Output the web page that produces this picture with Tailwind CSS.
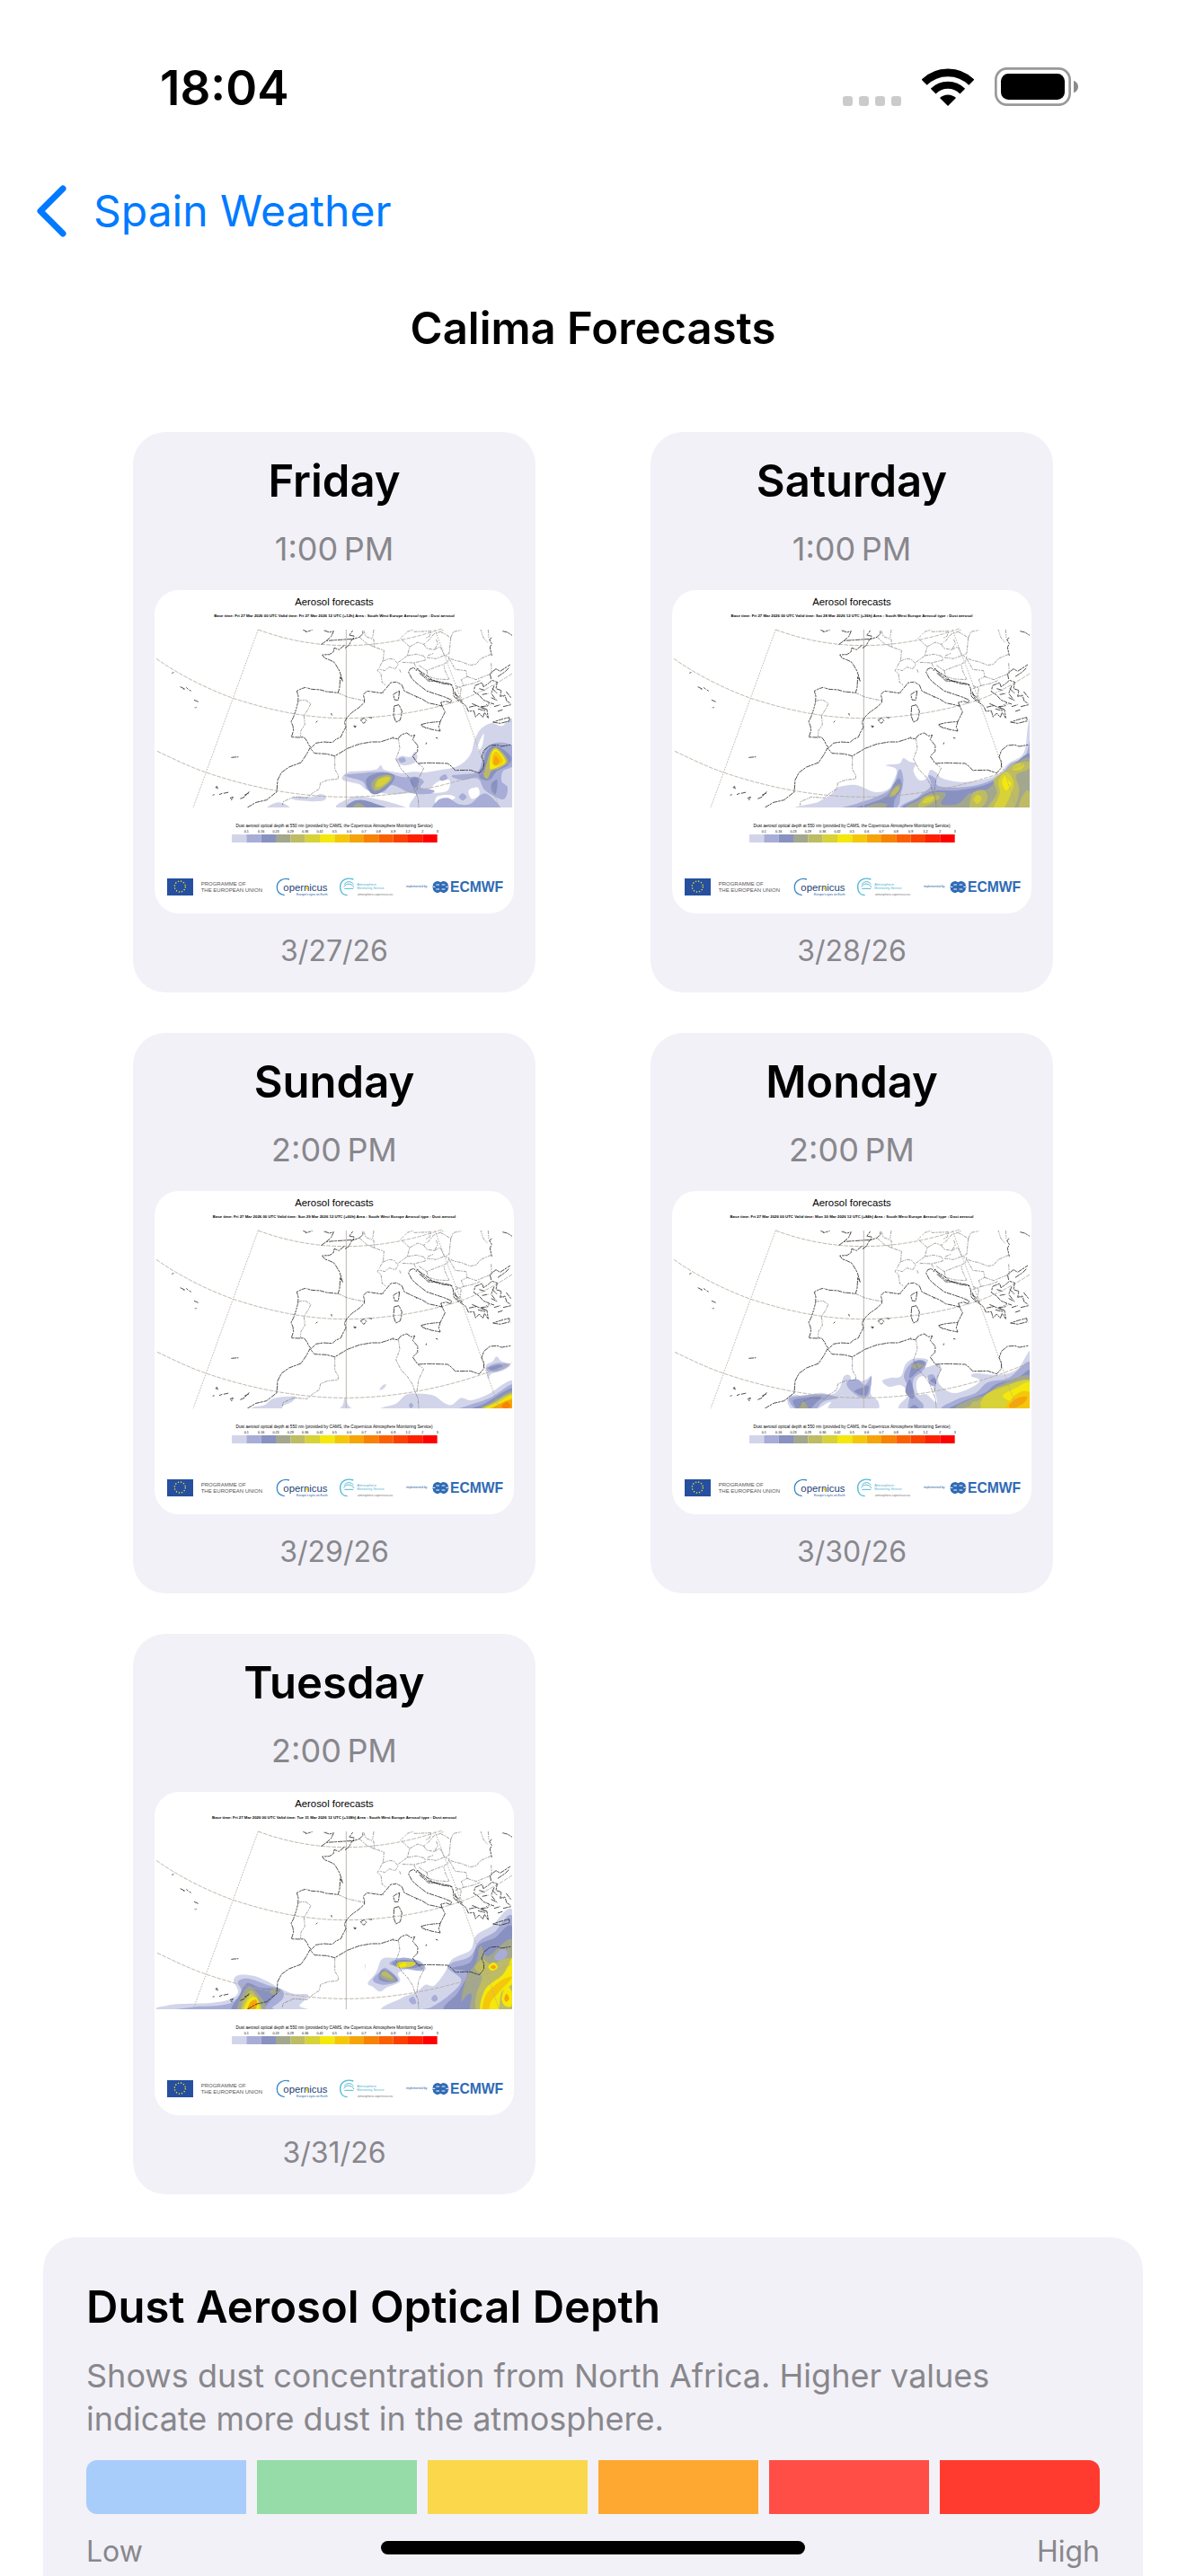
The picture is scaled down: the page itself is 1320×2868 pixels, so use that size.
<!DOCTYPE html>
<html lang="en">
    <head>
        <meta charset="UTF-8">
        <meta name="viewport" content="width=device-width, initial-scale=1.0">
        <title>Calima Forecasts</title>
        <script src="https://cdn.jsdelivr.net/npm/@tailwindcss/browser@4"></script>
    </head>
    <body class="flex flex-col min-h-screen bg-white text-black font-[Inter,sans-serif]">

        <!-- Status bar -->
        <div class="flex justify-between items-center h-[196px] pl-[178px] pr-[120px]">
            <div class="text-[53px] leading-[60px] font-semibold">18:04</div>
            <div class="flex items-end gap-[23px] pb-1">
                <svg class="w-[65px] h-[11px]" viewBox="0 0 195 33" fill="#cbcbcb">
                    <rect width="33" height="33" rx="10"/>
                    <rect x="54" width="33" height="33" rx="10"/>
                    <rect x="108" width="33" height="33" rx="10"/>
                    <rect x="162" width="33" height="33" rx="10"/>
                </svg>
                <svg class="w-[58px] h-[42px]" viewBox="374 75 174 126" fill="none" stroke="#000">
                    <path d="M382 122A112 112 0 0 1 540 122" stroke-width="26"/>
                    <path d="M412 152A69 69 0 0 1 510 152" stroke-width="24"/>
                    <path d="M461 201L434 174A39 39 0 0 1 488 174Z" fill="#000" stroke="none"/>
                </svg>
                <svg class="w-[93px] h-[43px]" viewBox="615 75 279 129">
                    <rect x="619" y="79" width="247" height="121" rx="37" fill="none" stroke="#999" stroke-width="8"/>
                    <rect x="636" y="96" width="213" height="87" rx="25"/>
                    <path d="M879 119C899 126 899 153 879 160Z" fill="#8a8a8a"/>
                </svg>
            </div>
        </div>
        <!-- /Status bar -->

        <!-- Navigation -->
        <nav class="flex items-center h-[78px] px-10">
            <a href="#" class="flex items-center gap-[30px] text-[48px] leading-[60px] text-[#007aff]">
                <svg class="w-[34px] h-[58px]" viewBox="0 0 34 58" fill="none" stroke="currentColor" stroke-width="7" stroke-linecap="round" stroke-linejoin="round">
                    <path d="M30 4L5 29L30 54"/>
                </svg>
                Spain Weather
            </a>
        </nav>

        <h1 class="mt-[62px] text-center text-[49px] leading-[60px] font-semibold">Calima Forecasts</h1>

        <!-- Forecast cards, filled by the script -->
        <main id="forecasts" class="grid grid-cols-2 justify-items-center gap-x-12 gap-y-[45px] px-[108px] mt-[85px]"></main>

        <!-- Legend -->
        <section class="flex-1 mx-12 mt-12 px-12 pt-12 rounded-t-[36px] bg-[#f2f1f7]">
            <h2 class="text-[49px] leading-[60px] font-semibold">Dust Aerosol Optical Depth</h2>
            <p class="mt-[22px] text-[36px] leading-[48px] text-[#88878c]">Shows dust concentration from North Africa. Higher values indicate more dust in the atmosphere.</p>
            <div class="grid grid-cols-6 gap-3 h-[60px] mt-[22px] rounded-xl overflow-hidden">
                <div class="bg-[#a9cdfa]"></div>
                <div class="bg-[#95dca8]"></div>
                <div class="bg-[#fad74b]"></div>
                <div class="bg-[#fea832]"></div>
                <div class="bg-[#ff4e46]"></div>
                <div class="bg-[#ff3b2f]"></div>
            </div>
            <div class="flex justify-between mt-[22px] text-[32px] leading-[40px] text-[#88878c]">
                <span>Low</span>
                <span>High</span>
            </div>
        </section>
        <!-- /Legend -->

        <!-- Home indicator -->
        <div class="fixed bottom-6 left-1/2 -translate-x-1/2 w-[472px] h-[15px] rounded-full bg-black"></div>

        <!-- Shared drawings -->
        <svg class="absolute w-0 h-0" aria-hidden="true">
            <defs>
                <clipPath id="mapArea"><rect x="12" y="153" width="1188" height="594"/></clipPath>
                <filter id="rough" x="0" y="0" width="100%" height="100%">
                    <feTurbulence type="fractalNoise" baseFrequency="0.12" numOctaves="2" seed="4"/>
                    <feDisplacementMap in="SourceGraphic" scale="5"/>
                </filter>

                <symbol id="basemap" viewBox="6 21 1200 1080">
                    <!-- graticule -->
                    <g fill="none" stroke="#b3aa9c" stroke-width="2.5">
                        <path d="M646 153V747" stroke="#bfb9ae" stroke-width="3"/>
                        <path stroke-dasharray="5 4" d="M352 153L268 382L178 630L135 747M942 153L1030 387L1115 628L1157 747"/>
                        <path stroke-dasharray="14 4" d="M352 153C450 190 550 206 646 206S850 190 965 150M12 250C90 305 180 350 268 382C400 425 520 449 646 449S920 425 1030 387C1100 362 1150 332 1200 300M15 559C70 585 120 610 178 630C330 682 490 712 646 712S970 680 1115 628L1200 595"/>
                    </g>
                    <!-- coasts -->
                    <g fill="none" stroke="#333" stroke-width="2.6" stroke-dasharray="17 2 8 3" filter="url(#rough)">
                        <path d="M640 205L622 220L606 214L603 228L590 236L566 237L574 248L590 254L606 262L616 278L624 292L634 325L626 310L624 345L619 364L600 362L580 360L560 354L530 352L510 346L497 350L481 358L486 375L485 395L479 418L470 445L462 460L468 475L470 490L463 512L490 513L505 512L515 525L522 540L530 547L545 532L570 528L600 530L610 520L628 512L634 498L645 478L640 462L650 445L665 430L690 412L706 397L707 385L703 370L715 358L735 361L765 365L780 348L795 330L815 328L832 338L840 358L870 372L900 385L920 398L940 402L966 408L976 428L970 440L960 460"/>
                        <path d="M966 408L962 396L980 392L994 398L998 388L975 378L945 368L915 358L885 335L866 318L854 295L860 284L872 280L880 290L884 282L898 300L920 318L960 328L996 335L1003 350L1005 375L1020 390L1034 398L1046 408L1054 426L1072 424L1078 445L1090 432L1102 446L1108 430L1120 448L1116 420L1096 410L1118 408L1124 396L1104 388L1090 372L1072 360L1076 340L1100 330L1104 344L1122 332L1132 322L1150 328L1146 350L1164 356L1160 376L1176 372L1182 392L1196 400"/>
                        <path d="M1130 318L1126 300L1146 284L1160 292L1194 270M1152 310L1176 294L1190 280M1134 350L1150 366M1090 350L1110 356M1100 370L1120 366M1130 380L1150 390M1140 410L1160 404M1170 410L1196 404M1128 398L1140 402M1152 426L1170 420M1056 412L1084 406M1066 400L1112 420M1086 418L1110 424M1140 340L1130 366L1144 384M1180 360L1196 380"/>
                        <path d="M886 288L912 304L934 322L962 332L1000 338M890 298L920 324L950 326M1008 360L1018 384L1034 392M1010 368L1026 382"/>
                        <path d="M896 470L920 464L960 460L955 478L960 492L930 486L900 476ZM806 408L822 404L832 425L830 440L826 455L812 462L804 440ZM824 358L820 388L808 388L803 370L815 362ZM694 455L706 448L714 458L704 466ZM722 446L732 448M671 474L679 476L675 480ZM1136 462L1160 466L1192 458L1190 446L1160 454Z"/>
                        <path d="M316 747L345 730L380 722L414 695L417 655L430 630L455 612L495 597L512 572L525 548L540 566L580 568L608 575L630 562L650 550L690 535L730 528L760 528L800 515L818 518L830 504L848 498L862 508L875 505L868 520L885 540L884 560L868 576L885 600L920 598L985 600L998 610L1010 623L1060 622L1090 632L1105 615L1106 595L1098 578L1106 556L1126 540L1150 538L1165 543L1195 538"/>
                        <path d="M562 203L580 190L610 188L640 186L670 184L672 174L656 172L668 156M572 156L590 162L604 158L596 176L580 190M502 154L515 160L533 154M642 215L655 205L665 186L690 178L702 166L700 156M1168 158L1184 162L1200 172"/>
                        <path d="M92 344L108 352M112 346L118 352M122 354L128 358M138 388L152 394M142 414L146 412M64 300L70 294M262 580L286 578M210 680L214 676L217 684ZM200 706L206 704M222 704L232 700M236 700L254 696M258 716L268 712L264 722ZM292 718L306 712L322 694M306 706L322 698M545 463L550 458M596 432L598 440M912 536L914 530M945 514L952 516M1132 180L1124 186L1132 200L1126 212L1132 240"/>
                    </g>
                    <!-- borders -->
                    <g fill="none" stroke="#777" stroke-width="2" stroke-dasharray="12 3 5 3" filter="url(#rough)">
                        <path d="M619 364L650 378L680 385L706 390M486 390L510 388L528 400L518 420L505 440L508 470L495 490L493 512M608 575L608 620L620 640L618 652L585 655L560 665L556 685L535 698L515 715L470 712L435 728L433 740M820 515L825 550L812 585L830 620L850 640L868 668L875 690L886 715L888 747M885 600L905 615L888 650L882 690"/>
                        <path d="M690 178L715 200L742 212L772 222L770 250L768 258L750 290L762 300L766 330L780 340M704 156L712 176L738 186L740 212M738 153L734 180M768 258L790 250L805 252L820 268L810 284L790 278L775 290L755 285M820 262L850 240L858 210L842 196L828 182L850 160L872 153M858 210L885 195L905 202L920 190L938 168L960 160L972 153M850 240L880 235L908 242L910 255L872 264L830 262M872 160L930 158L924 175L910 182M905 202L915 216L940 220L952 200L946 184M940 220L960 210L974 240L990 245L985 260L972 268L940 280L915 290L888 272M915 246L946 250L972 240M918 240L938 232M995 180L1004 160L1030 155M995 180L990 232L975 240M960 160L976 168L995 180M915 290L920 310L950 318L990 320L976 290L972 272M995 250L1010 256L1030 260L1060 272L1080 268L1095 250L1130 235M990 250L1010 286L1046 290L1050 310L1030 320L1038 340L1010 350M1050 310L1080 320L1130 300M1095 153L1104 180L1118 196M1120 153L1122 180M1130 265L1132 300M1010 340L1030 348L1026 378M1038 340L1072 332L1096 322M872 264L880 280M824 286L828 296"/>
                    </g>
                </symbol>

                <symbol id="logos" viewBox="6 21 1200 1080">
                    <rect x="48" y="984" width="87" height="57" fill="#264f9f"/>
                    <circle cx="91" cy="1011" r="18" fill="none" stroke="#e8dd2c" stroke-width="4" stroke-dasharray="4 5.4"/>
                    <g font-family="Liberation Sans, sans-serif">
                        <text x="161" y="1008" font-size="18" fill="#555">PROGRAMME OF</text>
                        <text x="161" y="1029" font-size="18" fill="#555">THE EUROPEAN UNION</text>
                        <text x="436" y="1026" font-size="34" fill="#1d3f77">opernicus</text>
                        <text x="480" y="1040" font-size="10" fill="#1d5c9c">Europe’s eyes on Earth</text>
                        <text x="682" y="1008" font-size="12" fill="#4fb3d0">Atmosphere</text>
                        <text x="682" y="1019" font-size="11" fill="#4fb3d0">Monitoring Service</text>
                        <text x="684" y="1040" font-size="10" fill="#777">atmosphere.copernicus.eu</text>
                        <text x="846" y="1014" font-size="10" fill="#1d5c9c">implemented by</text>
                        <text x="993" y="1029" font-size="47" font-weight="bold" fill="#2f6bb5">ECMWF</text>
                    </g>
                    <path d="M456 987C436 981 416 992 415 1012S424 1038 440 1040" fill="none" stroke="#3c88c4" stroke-width="4"/>
                    <path d="M508 1013L519 1013L519 1026Z" fill="#f4c70b"/>
                    <g fill="none" stroke="#53b9d4" stroke-width="4">
                        <path d="M670 987C648 979 626 990 626 1012S640 1040 650 1040"/>
                        <path d="M640 1004C645 992 665 992 670 1004M638 1012C645 998 665 1000 672 1014M640 1018H670" stroke-width="3"/>
                    </g>
                    <path fill="#2f6bb5" d="M936 1003C940 996 946 993 953 993L961 997L969 993C976 993 982 996 986 1003V1008H988V1017H986V1022C982 1029 976 1032 969 1032L961 1028L953 1032C946 1032 940 1029 936 1022V1017H934V1008H936Z"/>
                    <path fill="none" stroke="#fff" stroke-width="3" d="M946 1005H957M965 1005H976M946 1020H957M965 1020H976M933 1012H943M979 1012H989"/>
                </symbol>
            </defs>
        </svg>

        <script>
            // Legend scale of the chart, low to high
            const scale = ['#d2d5ea', '#a7add6', '#8891c0', '#a2a78e', '#bdbb63', '#d6d237', '#f4e80c', '#f4c70b', '#f5a50a', '#f78205', '#fa6003', '#fb4003', '#fd2001', '#ff0000'];
            const ticks = ['0.1', '0.16', '0.23', '0.29', '0.36', '0.42', '0.5', '0.6', '0.7', '0.8', '0.9', '1.2', '2', '3'];

            // Dust areas: [scale index or 'w' for a clear hole, x, y, x, y, ...]
            const forecasts = [
                {day: 'Friday', time: '1:00\u2009PM', date: '3/27/26', valid: 'Fri 27 Mar 2026 12 UTC (+12h)', dust: [
                    [0, 634,655, 650,630, 700,625, 745,620, 762,606, 775,622, 830,632, 870,628, 910,630, 960,622, 1010,612, 1045,590, 1065,560, 1075,520, 1095,485, 1130,465, 1165,475, 1205,468, 1210,760, 880,760, 880,700, 850,700, 800,703, 720,690, 690,670],
                    [0, 385,750, 395,738, 420,730, 445,738, 455,750], [0, 468,720, 480,710, 530,712, 560,702, 578,710, 570,724, 520,726],
                    [0, 620,750, 660,715, 700,710, 770,724, 840,745, 840,755],
                    [0, 812,590, 830,575, 860,578, 875,560, 884,580, 870,600, 835,606],
                    ['w', 925,690, 950,662, 990,655, 985,690, 945,698], ['w', 950,710, 990,705, 1010,715, 980,728, 945,735],
                    ['w', 1085,540, 1105,500, 1100,540, 1088,556], ['w', 1055,690, 1085,680, 1090,705, 1065,718],
                    [1, 640,640, 700,632, 770,628, 830,645, 880,645, 905,660, 895,680, 940,690, 920,702, 860,698, 800,672, 770,695, 720,690, 700,660],
                    [1, 820,585, 838,580, 845,592, 830,598], [1, 958,648, 975,636, 984,650, 965,658],
                    [1, 1000,640, 1080,630, 1100,590, 1110,550, 1150,530, 1205,545, 1205,605, 1170,625, 1165,660, 1185,680, 1170,720, 1110,690, 1085,650, 1030,655],
                    [1, 1022,712, 1035,700, 1048,712, 1035,724], [1, 950,725, 985,715, 1020,735, 1060,735, 1110,700, 1160,745, 1160,760, 950,760],
                    [2, 712,655, 740,635, 790,632, 808,645, 790,675, 750,702, 725,695],
                    [2, 652,750, 665,728, 700,722, 745,735, 775,750], [2, 862,650, 885,648, 880,680, 865,672],
                    [2, 1090,630, 1105,600, 1115,560, 1145,540, 1195,575, 1188,605, 1150,625, 1125,655, 1095,650], [2, 1130,670, 1150,655, 1146,700, 1134,695],
                    [3, 730,665, 755,642, 792,638, 800,652, 765,685, 738,692], [3, 668,750, 685,732, 710,745, 712,755],
                    [4, 740,680, 748,655, 785,640, 795,655, 765,680, 745,688], [4, 1105,640, 1115,600, 1128,560, 1150,548, 1185,590, 1160,615, 1132,625, 1118,650],
                    [5, 746,676, 755,654, 785,645, 790,655, 765,675], [6, 1125,610, 1130,570, 1148,552, 1178,592, 1155,612, 1130,620],
                    [7, 1134,600, 1136,570, 1150,562, 1170,592, 1150,608], [8, 1138,600, 1142,575, 1158,590, 1148,605]
                ]},
                {day: 'Saturday', time: '1:00\u2009PM', date: '3/28/26', valid: 'Sat 28 Mar 2026 12 UTC (+36h)', dust: [
                    [0, 460,755, 495,728, 535,705, 560,680, 620,672, 680,695, 725,688, 745,660, 755,620, 718,606, 765,600, 778,582, 800,595, 820,600, 812,625, 830,655, 855,650, 868,622, 888,630, 910,650, 970,662, 1040,655, 1095,635, 1130,600, 1180,565, 1195,470, 1210,440, 1210,760],
                    [1, 560,755, 620,735, 680,715, 740,680, 765,620, 778,650, 770,700, 740,755], [1, 790,755, 830,710, 870,675, 862,640, 885,650, 895,675, 960,680, 1040,668, 1100,640, 1135,602, 1185,575, 1210,500, 1210,760],
                    [2, 600,755, 650,738, 720,710, 745,670, 765,650, 772,680, 750,720, 730,755], [2, 800,755, 830,715, 880,692, 960,690, 1050,672, 1110,640, 1150,600, 1210,575, 1210,760],
                    [3, 640,755, 665,740, 700,732, 725,738, 700,755], [3, 730,705, 745,682, 768,670, 765,690, 740,712], [3, 812,755, 830,722, 870,700, 920,700, 905,735, 960,735, 1000,700, 1050,690, 1100,650, 1150,605, 1205,590, 1210,760],
                    [4, 738,700, 758,676, 764,688, 745,708], [4, 828,740, 850,712, 885,705, 900,715, 870,735, 835,750], [4, 1000,755, 1010,700, 1050,690, 1058,720, 1035,750], [4, 1080,655, 1120,625, 1150,600, 1200,595, 1195,620, 1155,640, 1165,690, 1140,755, 1060,755, 1090,700], [4, 1170,720, 1195,690, 1205,755, 1165,755],
                    [5, 842,732, 855,715, 880,712, 870,728], [5, 1012,722, 1025,705, 1040,715, 1028,735], [5, 1095,660, 1118,628, 1140,645, 1145,680, 1110,755, 1080,750, 1100,700], [5, 1138,620, 1160,602, 1182,604, 1170,622],
                    [6, 1108,665, 1118,640, 1128,655, 1138,668, 1122,690]
                ]},
                {day: 'Sunday', time: '2:00\u2009PM', date: '3/29/26', valid: 'Sun 29 Mar 2026 12 UTC (+60h)', dust: [
                    [0, 318,755, 340,742, 375,735, 400,715, 440,708, 478,708, 465,725, 435,738, 420,755], [0, 622,755, 635,735, 642,712, 652,735, 668,755], [0, 757,685, 768,670, 780,668, 770,682],
                    [0, 780,755, 815,730, 850,700, 900,698, 940,705, 975,730, 1000,735, 1030,712, 1065,720, 1120,700, 1205,655, 1205,760],
                    [0, 1112,605, 1135,590, 1148,574, 1165,590, 1195,600, 1170,620, 1130,632, 1120,650],
                    [1, 855,738, 862,728, 870,738, 862,746], [1, 1020,755, 1060,735, 1130,710, 1205,668, 1205,760], [1, 1116,610, 1150,596, 1190,602, 1150,624, 1120,622],
                    [2, 1120,612, 1150,602, 1168,606, 1140,620], [2, 1060,755, 1110,730, 1205,680, 1205,760], [3, 1085,755, 1130,728, 1205,690, 1205,760], [5, 1095,755, 1140,728, 1205,697, 1205,760],
                    [6, 1100,755, 1150,730, 1205,704, 1205,760], [7, 1120,755, 1160,730, 1205,714, 1205,760], [8, 1130,755, 1165,730, 1205,720, 1205,760], [9, 1165,740, 1182,725, 1195,738, 1180,748]
                ]},
                {day: 'Monday', time: '2:00\u2009PM', date: '3/30/26', valid: 'Mon 30 Mar 2026 12 UTC (+84h)', dust: [
                    [0, 390,715, 415,702, 440,705, 500,695, 540,700, 565,680, 580,640, 600,638, 610,662, 655,650, 672,640, 670,700, 695,725, 680,755, 535,755, 535,725, 475,755, 410,755],
                    [0, 708,655, 735,645, 770,640, 785,600, 815,580, 860,585, 850,610, 890,600, 905,612, 895,660, 940,695, 990,685, 1035,655, 1005,640, 1020,630, 1100,635, 1160,615, 1210,555, 1210,760, 790,760, 795,700, 770,670, 730,675],
                    ['w', 822,660, 838,640, 865,650, 882,690, 890,730, 855,700, 828,700],
                    [1, 396,715, 440,704, 510,700, 560,712, 510,725, 480,755, 425,755], [1, 590,660, 625,650, 650,668, 672,640, 664,700, 640,712, 600,685], [1, 780,640, 800,600, 830,585, 855,595, 840,625, 812,650, 815,700, 845,735, 835,755, 795,755, 800,690], [1, 860,640, 880,635, 888,665, 870,670],
                    [1, 920,755, 950,720, 1020,695, 1060,660, 1130,645, 1205,595, 1210,760],
                    [2, 410,720, 460,710, 505,708, 485,730, 460,755, 430,755], [2, 615,690, 640,678, 662,672, 652,705], [2, 798,645, 812,595, 840,588, 850,600, 825,625], [2, 785,690, 800,650, 815,700, 806,715], [2, 795,755, 815,735, 832,755], [2, 868,655, 882,645, 888,665], [2, 945,755, 975,725, 1050,695, 1090,665, 1160,645, 1205,625, 1205,760],
                    [3, 430,750, 442,722, 455,735, 462,755], [3, 806,608, 820,598, 845,602, 825,616], [3, 960,755, 1000,718, 1060,700, 1100,670, 1205,640, 1205,760], [4, 975,755, 1010,735, 1070,690, 1110,672, 1205,655, 1205,760],
                    [5, 995,755, 1030,735, 1055,700, 1100,680, 1205,655, 1205,760], [4, 1000,755, 1010,725, 1035,730, 1030,755], [6, 1110,705, 1150,680, 1205,662, 1205,760, 1130,760, 1140,730], [7, 1120,755, 1140,715, 1175,690, 1205,700, 1205,760], [8, 1130,740, 1155,715, 1190,708, 1180,730, 1150,745]
                ]},
                {day: 'Tuesday', time: '2:00\u2009PM', date: '3/31/26', valid: 'Tue 31 Mar 2026 12 UTC (+108h)', dust: [
                    [0, 15,755, 60,732, 130,728, 200,725, 255,715, 285,690, 270,650, 290,632, 340,636, 385,655, 420,675, 470,695, 520,700, 490,735, 500,755],
                    [0, 718,660, 745,625, 765,580, 800,575, 840,578, 890,585, 912,610, 895,620, 860,612, 820,625, 825,655, 780,675, 758,688, 735,672],
                    [0, 785,755, 830,710, 880,690, 910,665, 940,668, 975,625, 1000,580, 1060,550, 1080,500, 1130,470, 1205,425, 1210,760],
                    [0, 708,600, 710,596, 711,615], [1, 60,755, 130,740, 250,730, 295,690, 285,655, 320,645, 380,665, 430,682, 435,710, 400,740, 390,755],
                    [1, 735,650, 760,620, 780,610, 820,650, 770,665], [1, 790,595, 830,575, 880,583, 908,605, 890,618, 840,610], [1, 880,755, 930,740, 990,700, 1030,650, 985,610, 1000,592, 1060,570, 1090,520, 1140,490, 1205,445, 1210,760], [1, 930,712, 942,698, 952,712, 940,722], [1, 855,715, 870,705, 880,725, 866,730],
                    [2, 265,755, 290,700, 315,660, 360,675, 425,680, 405,705, 375,740, 370,755], [2, 755,645, 765,615, 795,625, 818,652, 780,656], [2, 800,592, 830,582, 870,586, 895,602, 860,610, 820,608], [2, 980,755, 1020,690, 1050,625, 1000,610, 1060,590, 1085,535, 1140,510, 1205,480, 1210,760],
                    [3, 285,755, 298,700, 320,672, 345,688, 375,730, 360,755], [3, 390,690, 405,676, 420,685, 405,698], [3, 760,638, 775,618, 808,645, 800,655], [3, 1030,720, 1048,640, 1080,590, 1095,535, 1120,570, 1205,520, 1210,760, 1070,760, 1065,700, 1050,700], [1, 1140,575, 1165,545, 1185,560, 1165,585],
                    [4, 298,755, 308,705, 330,685, 355,720, 362,755], [4, 765,632, 778,622, 802,645], [4, 1075,610, 1100,580, 1130,595, 1190,575, 1205,600, 1205,760, 1090,760, 1080,700, 1100,640], [5, 815,605, 820,590, 860,588, 878,592, 870,602, 835,609], [5, 300,755, 320,705, 335,700, 358,735, 358,755],
                    [6, 818,603, 840,592, 848,600, 825,607], [6, 306,755, 320,715, 345,708, 355,735, 345,755], [8, 315,755, 325,725, 345,715, 348,735, 335,755], [6, 1095,755, 1110,680, 1170,630, 1205,570, 1205,655, 1165,690, 1150,755], [7, 1100,755, 1115,695, 1165,650, 1200,640, 1165,680, 1130,720, 1120,755], [6, 1120,605, 1138,590, 1152,606, 1136,620], [8, 1128,606, 1138,599, 1146,606, 1138,613],
                    [6, 1165,710, 1180,670, 1200,690, 1198,735, 1175,735], [8, 1174,710, 1182,695, 1190,712, 1180,722]
                ]}
            ];

            // Smooth closed outline through the points
            function outline(p) {
                const n = p.length / 2;
                const at = function(i) { const k = (i + n) % n; return [p[k * 2], p[k * 2 + 1]]; };
                let d = 'M' + at(0);
                for (let i = 0; i < n; i++) {
                    const a = at(i - 1), b = at(i), c = at(i + 1), e = at(i + 2);
                    d += 'C' + [b[0] + (c[0] - a[0]) / 6, b[1] + (c[1] - a[1]) / 6, c[0] - (e[0] - b[0]) / 6, c[1] - (e[1] - b[1]) / 6, c[0], c[1]].map(Math.round);
                }
                return d + 'Z';
            }

            function chart(item) {
                const dust = item.dust.map(function(area) {
                    const fill = area[0] === 'w' ? '#fff' : scale[area[0]];
                    return `<path fill="${fill}" d="${outline(area.slice(1))}"/>`;
                }).join('');
                const cells = scale.map((color, i) => `<rect x="${264 + i * 49}" y="837" width="49" height="27" fill="${color}"/><text x="${313 + i * 49}" y="831" font-size="11">${ticks[i]}</text>`).join('');

                return `
                    <svg class="w-full h-[360px] rounded-[27px] bg-white" viewBox="6 21 1200 1080" role="img" aria-label="Aerosol forecast map for ${item.day}">
                        <g clip-path="url(#mapArea)">${dust}</g>
                        <use href="#basemap" x="6" y="21" width="1200" height="1080"/>
                        <g font-family="Liberation Sans, sans-serif" text-anchor="middle">
                            <text x="606" y="73" font-size="34">Aerosol forecasts</text>
                            <text x="606" y="111" font-size="13" font-weight="bold">Base time: Fri 27 Mar 2026 00 UTC Valid time: ${item.valid} Area : South West Europe Aerosol type : Dust aerosol</text>
                            <text x="606" y="814" font-size="14">Dust aerosol optical depth at 550 nm (provided by CAMS, the Copernicus Atmosphere Monitoring Service)</text>
                            ${cells}
                        </g>
                        <use href="#logos" x="6" y="21" width="1200" height="1080"/>
                    </svg>`;
            }

            // Create cards
            for (const item of forecasts) {
                const card = document.createElement('article');
                card.classList.add('w-[448px]', 'h-[624px]', 'px-6', 'pt-[25px]', 'rounded-[36px]', 'bg-[#f2f1f7]', 'text-center');
                card.innerHTML = `
                    <h2 class="text-[49px] leading-[60px] font-semibold">${item.day}</h2>
                    <p class="mt-[21px] mb-[22px] text-[36px] leading-[48px] text-[#88878c]">${item.time}</p>
                    ${chart(item)}
                    <p class="mt-[22px] text-[32px] leading-[40px] text-[#88878c]">${item.date}</p>`;
                document.querySelector('#forecasts').appendChild(card);
            }
        </script>
    </body>
</html>
